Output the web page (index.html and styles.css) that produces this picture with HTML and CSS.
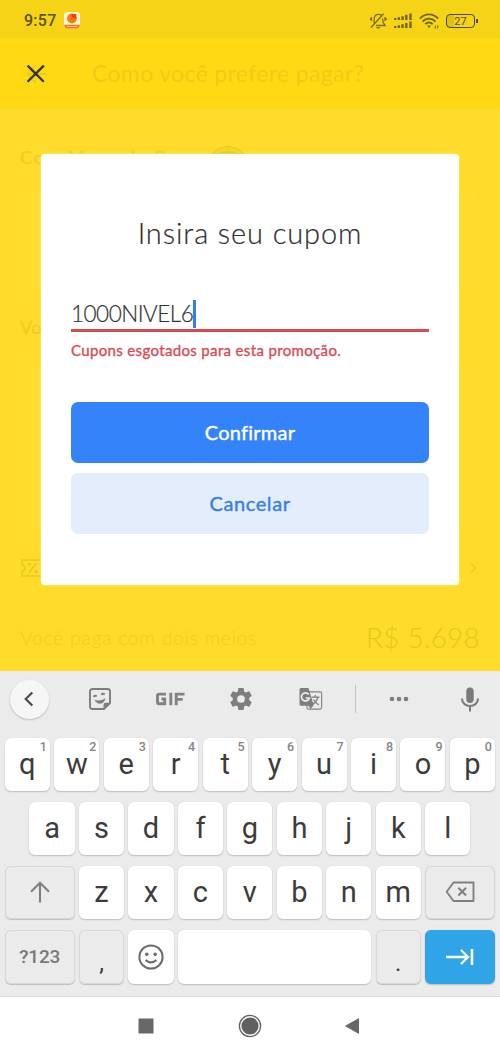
FILE: index.html
```html
<!DOCTYPE html>
<html lang="pt-BR">
<head>
<meta charset="utf-8">
<title>Insira seu cupom</title>
<link rel="stylesheet" href="styles.css">
</head>
<body>
<div class="phone">
  <div class="status">
    <span class="clock">9:57</span>
    <svg class="app-icon" width="16" height="17" viewBox="0 0 16 17"><rect width="16" height="16.500" rx="3.500" fill="#fff6dc"/><path d="M.2 12.800h15.600c0 2.500-1.200 3.700-3.500 3.700H3.700C1.400 16.500.2 15.300.2 12.800z" fill="#ef7c1b"/><path d="M3 14.500h10" stroke="#fbd9a8" stroke-width="1" stroke-dasharray="1.500 .6"/><circle cx="8" cy="6.500" r="4.900" fill="#ff7a08"/><path d="M7.200 2.200l5.200-.3-.5 4.600c-2.400.3-4.300-1.500-4.700-4.300z" fill="#f2381b"/></svg>
    <span class="spacer"></span>
    <svg class="bell" width="17" height="16" viewBox="0 0 17 16" fill="none" stroke="#7b6d17" stroke-width="1.300"><path d="M4.200 10.500V6c0-3 1.600-4.600 4.300-4.600 1.200 0 2.200.3 3 1M12.500 5.500c.1 3.500.6 5 2.500 7H6M1.500 4v4M.6 5v2M15 4v4M16 5v2M1 14.500L13.600.8"/><path d="M6.500 14.200c1 1.200 2.500 1.200 3.500 0"/></svg>
    <svg class="signal" width="20" height="16" viewBox="0 0 20 16" fill="none" stroke="#75671a" stroke-width="2.400"><path d="M2.200 7V5M5.900 7V4.300M9.600 7V3.200M13.300 7V1.800M17.500 7V.6M2.200 15v-2M5.900 15v-2.700M9.600 15v-3.800M13.300 15v-5M17.500 15V8.500"/></svg>
    <svg class="wifi" width="20" height="16" viewBox="0 0 20 16" fill="none" stroke="#75671a" stroke-width="1.800"><path d="M.8 5.600C6-.1 14-.1 19.200 5.600M3.600 8.600c3.700-4 9.100-4 12.800 0M6.300 11.200c2.200-2.300 5.200-2.300 7.400 0"/><path d="M8 12.500h4L10 15z" fill="#75671a" stroke="none"/><path d="M16.500 12.500v3M15.500 14l1 1.300M18.500 15.500v-3M19.500 13.800l-1-1.200" stroke-width=".8"/></svg>
    <div class="battery"><span>27</span></div>
  </div>

  <div class="header">
    <svg class="close" width="20" height="20" viewBox="0 0 20 20"><path d="M20 10H1M10 1L1 10l9 9" fill="none" stroke="#f0cd16" stroke-width="2"/><path d="M1.600 1.600l16.200 16.200M17.800 1.600L1.600 17.800" stroke="#33311a" stroke-width="2.300"/></svg>
    <span class="header-title">Como você prefere pagar?</span>
  </div>

  <div class="page">
    <div class="section-title"><span>Com Mercado Pago</span><svg width="34" height="22" viewBox="0 0 34 22"><ellipse cx="17" cy="11" rx="16" ry="10.500" fill="#efd62b" stroke="#e4c81f"/><path d="M2 7c6 2 8-1 15-1s9 3 15 1M11 9c3-3 9-3 12 0" fill="none" stroke="#e2c425"/></svg></div>
    <div class="ghost-card first"></div>
    <div class="section-title second"><span>Você</span></div>
    <div class="ghost-card last"></div>
    <div class="coupon-row">
      <svg width="30" height="18" viewBox="0 0 30 18" fill="none" stroke="#e8c81f" stroke-width="1.500"><path d="M1 1h28v16H1v-4.500c3.500-1 3.500-6 0-7zM8 13.500L15 4.500"/><circle cx="8.500" cy="5.300" r=".8"/><circle cx="15" cy="12.500" r=".8"/></svg>
      <svg width="8" height="12" viewBox="0 0 8 12"><path d="M1.500 1L6.500 6l-5 5" fill="none" stroke="#ecca1d" stroke-width="1.200"/></svg>
    </div>
    <div class="total"><span class="total-label">Você paga com dois meios</span><span class="total-price">R$ 5.698</span></div>
  </div>

  <div class="modal">
    <div class="modal-title">Insira seu cupom</div>
    <div class="field"><span class="value">1000NIVEL6</span><span class="caret"></span></div>
    <div class="error">Cupons esgotados para esta promoção.</div>
    <div class="button primary">Confirmar</div>
    <div class="button secondary">Cancelar</div>
  </div>

  <div class="keyboard">
    <div class="toolbar">
      <div class="back"><svg width="12" height="16" viewBox="0 0 12 16"><path d="M9.300 1.500L2.700 8l6.600 6.500" fill="none" stroke="#4c4c4c" stroke-width="2.200"/></svg></div>
      <svg class="sticker" width="22" height="22" viewBox="0 0 22 22" fill="none" stroke="#7e7e7e"><path d="M3.500 1h15Q21 1 21 3.500V15l-6 6H3.500Q1 21 1 18.500v-15Q1 1 3.500 1z" stroke-width="1.900"/><path d="M14.500 21v-4q0-2.200 2.200-2.200H21z" fill="#7e7e7e" stroke="none"/><path d="M4.500 8.800q1.400-1.700 3.300-.6M12.200 6.700q1.600-1.600 3.500-.3" stroke-width="1.900"/><path d="M5.500 11.800q5.500 1.700 11-1.600-1.500 5.300-5.300 5.500-3.700 0-5.700-3.900z" fill="#7e7e7e" stroke="none"/></svg>
      <svg class="gif" width="29" height="14" viewBox="0 0 29 14" fill="none" stroke="#828282" stroke-width="2.900"><path d="M10 2.100H3.200Q1.500 2.100 1.500 3.700v6.500q0 1.600 1.700 1.600h5.500V7H5.500M14.800.7v12.500M20.200 13.200V2.100h8.300M20.200 7.400h6.500"/></svg>
      <svg class="gear" width="22" height="22" viewBox="2 2 20 20"><path fill="#7e7e7e" d="M19.430 12.980c.04-.32.07-.64.07-.98s-.03-.66-.07-.98l2.110-1.650c.19-.15.24-.42.12-.64l-2-3.460c-.12-.22-.39-.3-.61-.22l-2.490 1c-.52-.4-1.080-.73-1.690-.98l-.38-2.650A.49.490 0 0 0 14 2h-4c-.25 0-.46.18-.49.420l-.38 2.650c-.61.25-1.170.59-1.690.98l-2.490-1c-.23-.09-.49 0-.61.22l-2 3.460c-.13.22-.07.49.12.64l2.110 1.650c-.04.32-.07.65-.07.98s.03.66.07.98l-2.110 1.650c-.19.15-.24.42-.12.64l2 3.460c.12.22.39.3.61.22l2.490-1c.52.4 1.080.73 1.690.98l.38 2.650c.03.24.24.42.49.42h4c.25 0 .46-.18.49-.42l.38-2.650c.61-.25 1.170-.59 1.690-.98l2.490 1c.23.09.49 0 .61-.22l2-3.460c.12-.22.07-.49-.12-.64l-2.110-1.650zM12 15.500a3.500 3.500 0 1 1 0-7 3.500 3.500 0 0 1 0 7z"/></svg>
      <svg class="translate" width="24" height="24" viewBox="0 0 24 24"><rect x="8" y="4.800" width="14.600" height="17.400" rx="1.500" fill="#ececec" stroke="#858585" stroke-width="1.200"/><path d="M2 1h7.500l5.200 17.200L11.500 22l-2-3.200H2Q.5 18.800.5 17.300V2.500Q.5 1 2 1z" fill="#7e7e7e"/><path d="M9.700 7.600A4 4 0 1 0 10.300 11H6.700" fill="none" stroke="#ededed" stroke-width="1.700"/><path d="M12.500 10.200h8M16.300 8v2M18.800 10.500q-1.500 5-6 7.200M14.300 12.500q2.200 3.300 5.500 5.500" fill="none" stroke="#7e7e7e" stroke-width="1.300"/></svg>
      <span class="divider"></span>
      <svg class="dots" width="20" height="6" viewBox="0 0 20 6" fill="#7e7e7e"><circle cx="3" cy="3" r="2.300"/><circle cx="10" cy="3" r="2.300"/><circle cx="17" cy="3" r="2.300"/></svg>
      <svg class="mic" width="18" height="25" viewBox="0 0 18 25"><rect x="5.300" y=".5" width="7.400" height="15.500" rx="3.700" fill="#7a7a7a"/><path d="M1 11.500c0 10 16 10 16 0M9 19v5.500" fill="none" stroke="#7a7a7a" stroke-width="2"/></svg>
    </div>
    <div class="row">
      <div class="key">q<sup>1</sup></div><div class="key">w<sup>2</sup></div><div class="key">e<sup>3</sup></div><div class="key">r<sup>4</sup></div><div class="key">t<sup>5</sup></div><div class="key">y<sup>6</sup></div><div class="key">u<sup>7</sup></div><div class="key">i<sup>8</sup></div><div class="key">o<sup>9</sup></div><div class="key">p<sup>0</sup></div>
    </div>
    <div class="row inset">
      <div class="key">a</div><div class="key">s</div><div class="key">d</div><div class="key">f</div><div class="key">g</div><div class="key">h</div><div class="key">j</div><div class="key">k</div><div class="key">l</div>
    </div>
    <div class="row">
      <div class="key gray wide"><svg width="20" height="22" viewBox="0 0 20 22"><path d="M10 21.500V2M1 10.800L10 1.800l9 9" fill="none" stroke="#808080" stroke-width="2.100"/></svg></div>
      <div class="key">z</div><div class="key">x</div><div class="key">c</div><div class="key">v</div><div class="key">b</div><div class="key">n</div><div class="key">m</div>
      <div class="key gray wide"><svg width="30" height="22" viewBox="0 0 30 22" fill="none" stroke="#808080"><path d="M8.500 1.500H28.500v18.500H8.500L1.700 10.750z" stroke-width="1.900" stroke-linejoin="round"/><path d="M13.300 6.700l7.800 7.800M21.100 6.700l-7.800 7.800" stroke-width="2"/></svg></div>
    </div>
    <div class="row">
      <div class="key gray wide mode">?123</div>
      <div class="key gray punct">,</div>
      <div class="key"><svg width="26" height="26" viewBox="0 0 26 26" fill="none" stroke="#6b6b6b" stroke-width="2"><circle cx="13" cy="13" r="11.600"/><path d="M7.500 16q5.500 4.800 11 0"/><circle cx="8.800" cy="10.300" r="1.800" fill="#6b6b6b" stroke="none"/><circle cx="17.200" cy="10.300" r="1.800" fill="#6b6b6b" stroke="none"/></svg></div>
      <div class="key space"></div>
      <div class="key gray punct">.</div>
      <div class="key wide go"><svg width="28" height="18" viewBox="0 0 28 18" fill="none" stroke="#fff"><path d="M0 9h22M15 2l7 7-7 7" stroke-width="2.300"/><path d="M26 1v16" stroke-width="2.600"/></svg></div>
    </div>
  </div>

  <div class="nav">
    <svg width="16" height="16" viewBox="0 0 16 16"><rect x=".5" y=".5" width="15" height="15" fill="#686868"/></svg>
    <svg width="24" height="24" viewBox="0 0 24 24"><circle cx="12" cy="12" r="10.600" fill="none" stroke="#606060" stroke-width="1.300"/><circle cx="12" cy="12" r="8.600" fill="#606060"/></svg>
    <svg width="16" height="18" viewBox="0 0 16 18"><path d="M15 1v16L.8 9z" fill="#686868"/></svg>
  </div>
</div>
</body>
</html>
```
FILE: styles.css
```css
* { box-sizing: border-box; }
body { margin: 0; font-family: Lato, "Open Sans", sans-serif; }
svg { display: block; flex: none; }
.phone { position: relative; width: 500px; height: 1056px; display: flex; flex-direction: column; overflow: hidden; background: #fff; white-space: nowrap; }

.status { height: 38px; flex: none; display: flex; align-items: center; padding: 3px 25px 0 24px; background: #f5d316; }
.clock { font: 500 16px/20px Roboto, sans-serif; color: #5c5010; letter-spacing: .25px; width: 40px; }
.spacer { flex: 1; }
.signal { margin-left: 6px; }
.wifi { margin-left: 6px; }
.battery { position: relative; margin-left: 7px; width: 29px; height: 14px; border: 1.500px solid #51460f; border-radius: 4px; background: linear-gradient(90deg, #dfbe17 27%, #f5d316 27%); font: 400 11px/13px Roboto, sans-serif; color: #564a10; text-align: center; }
.battery::after { content: ""; position: absolute; right: -3.500px; top: 4px; width: 2px; height: 4px; background: #51460f; }

.header { height: 71px; flex: none; display: flex; align-items: center; padding-left: 26px; background: #ffda14; }
.header-title { margin: -2px 0 0 46px; font-size: 23px; font-weight: 400; color: #f0cb15; letter-spacing: .35px; }

.page { height: 562px; flex: none; background: #ffdc2b; padding: 0 20px; display: flex; flex-direction: column; }
.section-title { display: flex; align-items: center; gap: 11px; margin-top: 36px; height: 23px; font-size: 18px; font-weight: 400; -webkit-text-stroke: .5px #efce26; letter-spacing: 1.550px; color: #efce26; }
.section-title.second { margin-top: 23px; letter-spacing: .5px; }
.ghost-card { height: 102px; margin-top: 22px; border-radius: 6px; border: 1px solid #fddb29; background: #ffdd2d; }
.section-title.second + .ghost-card { height: 172px; margin-top: 22px; border-radius: 6px 6px 0 0; }
.coupon-row { margin-top: 27px; padding-left: 1px; display: flex; align-items: center; justify-content: space-between; padding-right: 3px; }
.total { margin-top: 40px; height: 40px; display: flex; align-items: center; justify-content: space-between; color: #efcd1e; }
.total-label { font-size: 19.500px; font-weight: 300; letter-spacing: .650px; }
.total-price { font-size: 28px; font-weight: 300; color: #e8c51a; letter-spacing: .2px; }

.modal { position: absolute; left: 41px; top: 154px; width: 418px; height: 431px; padding: 60px 30px 0; border-radius: 4px; background: #fff; box-shadow: 0 0 2px #fff2a5; }
.modal-title { height: 38px; line-height: 38px; font-size: 29px; font-weight: 300; text-align: center; color: #303030; letter-spacing: .9px; -webkit-text-stroke: .2px #303030; }
.field { margin-top: 46px; height: 33.500px; padding-top: 1px; border-bottom: 2.500px solid #d54b55; border-bottom-width: 3px; display: flex; align-items: flex-start; color: #333; }
.value { font-size: 22.500px; line-height: 30px; font-weight: 300; width: 122px; letter-spacing: -.500px; -webkit-text-stroke: .2px #333; }
.caret { width: 3px; height: 28px; margin-top: 1px; background: #347ff0; }
.error { margin-top: 9.500px; height: 20px; line-height: 19px; font-size: 15px; font-weight: 400; -webkit-text-stroke: .35px #d94c56; letter-spacing: .350px; color: #d94c56; }
.button { height: 61px; line-height: 60px; border-radius: 7px; text-align: center; font-size: 20px; font-weight: 400; -webkit-text-stroke: .4px currentColor; letter-spacing: .250px; font-variant-ligatures: none; }
.primary { margin-top: 40.500px; color: #fff; background: #3483fa; }
.secondary { margin-top: 10.500px; color: #397fe3; background: #e3edfb; letter-spacing: .6px; }

.keyboard { height: 326px; flex: none; padding: 0 5px 0 4.800px; background: #ebebeb; border-bottom: 1px solid #dcdcdc; font-family: Roboto, sans-serif; }
.toolbar { height: 56px; display: flex; align-items: center; padding-left: 5px; margin-bottom: 11px; }
.back { width: 39px; height: 39px; display: flex; align-items: center; justify-content: center; border-radius: 50%; background: #f6f6f6; box-shadow: 0 1px 2px #bbb; }
.sticker { margin-left: 40px; }
.gif { margin-left: 45px; }
.gear { margin-left: 45px; }
.translate { margin-left: 47px; }
.divider { width: 1px; height: 28px; margin-left: 32px; background: #c4c4c4; }
.dots { margin-left: 33px; }
.mic { margin-left: 52px; }
.row { display: flex; gap: 4.400px; height: 53.300px; margin-bottom: 10.800px; }
.inset { padding: 0 24.700px; }
.key { position: relative; flex: 1 1 0; min-width: 0; display: flex; align-items: center; justify-content: center; border-radius: 6px; background: #fff; box-shadow: 0 1px 1.500px #bdbdbd, 0 0 1px #d2d2d2; font-size: 29px; color: #3c3c3c; padding-bottom: 2px; }
.key sup { position: absolute; right: 3px; top: 2px; font-size: 12.500px; font-weight: 500; line-height: 14px; color: #858585; }
.wide { flex: none; width: 69.800px; }
.gray { background: #ebebeb; box-shadow: 0 0 0 1px #d8d8d8 inset, 0 1px 1px #bdbdbd; }
.mode { font-size: 19px; font-weight: 500; color: #787878; padding: 0; letter-spacing: -.2px; }
.punct { flex: none; width: 45.100px; font-size: 24px; padding-top: 14px; }
.row:last-child .key:nth-child(3) { flex: none; width: 45.100px; padding: 0; }
.go { background: #2fa5e7; padding: 0; }

.nav { height: 59px; flex: none; display: flex; align-items: center; padding: 0 0 1px 138px; gap: 84px; background: #fff; }
.nav svg:last-child { margin-left: -2px; }
```
